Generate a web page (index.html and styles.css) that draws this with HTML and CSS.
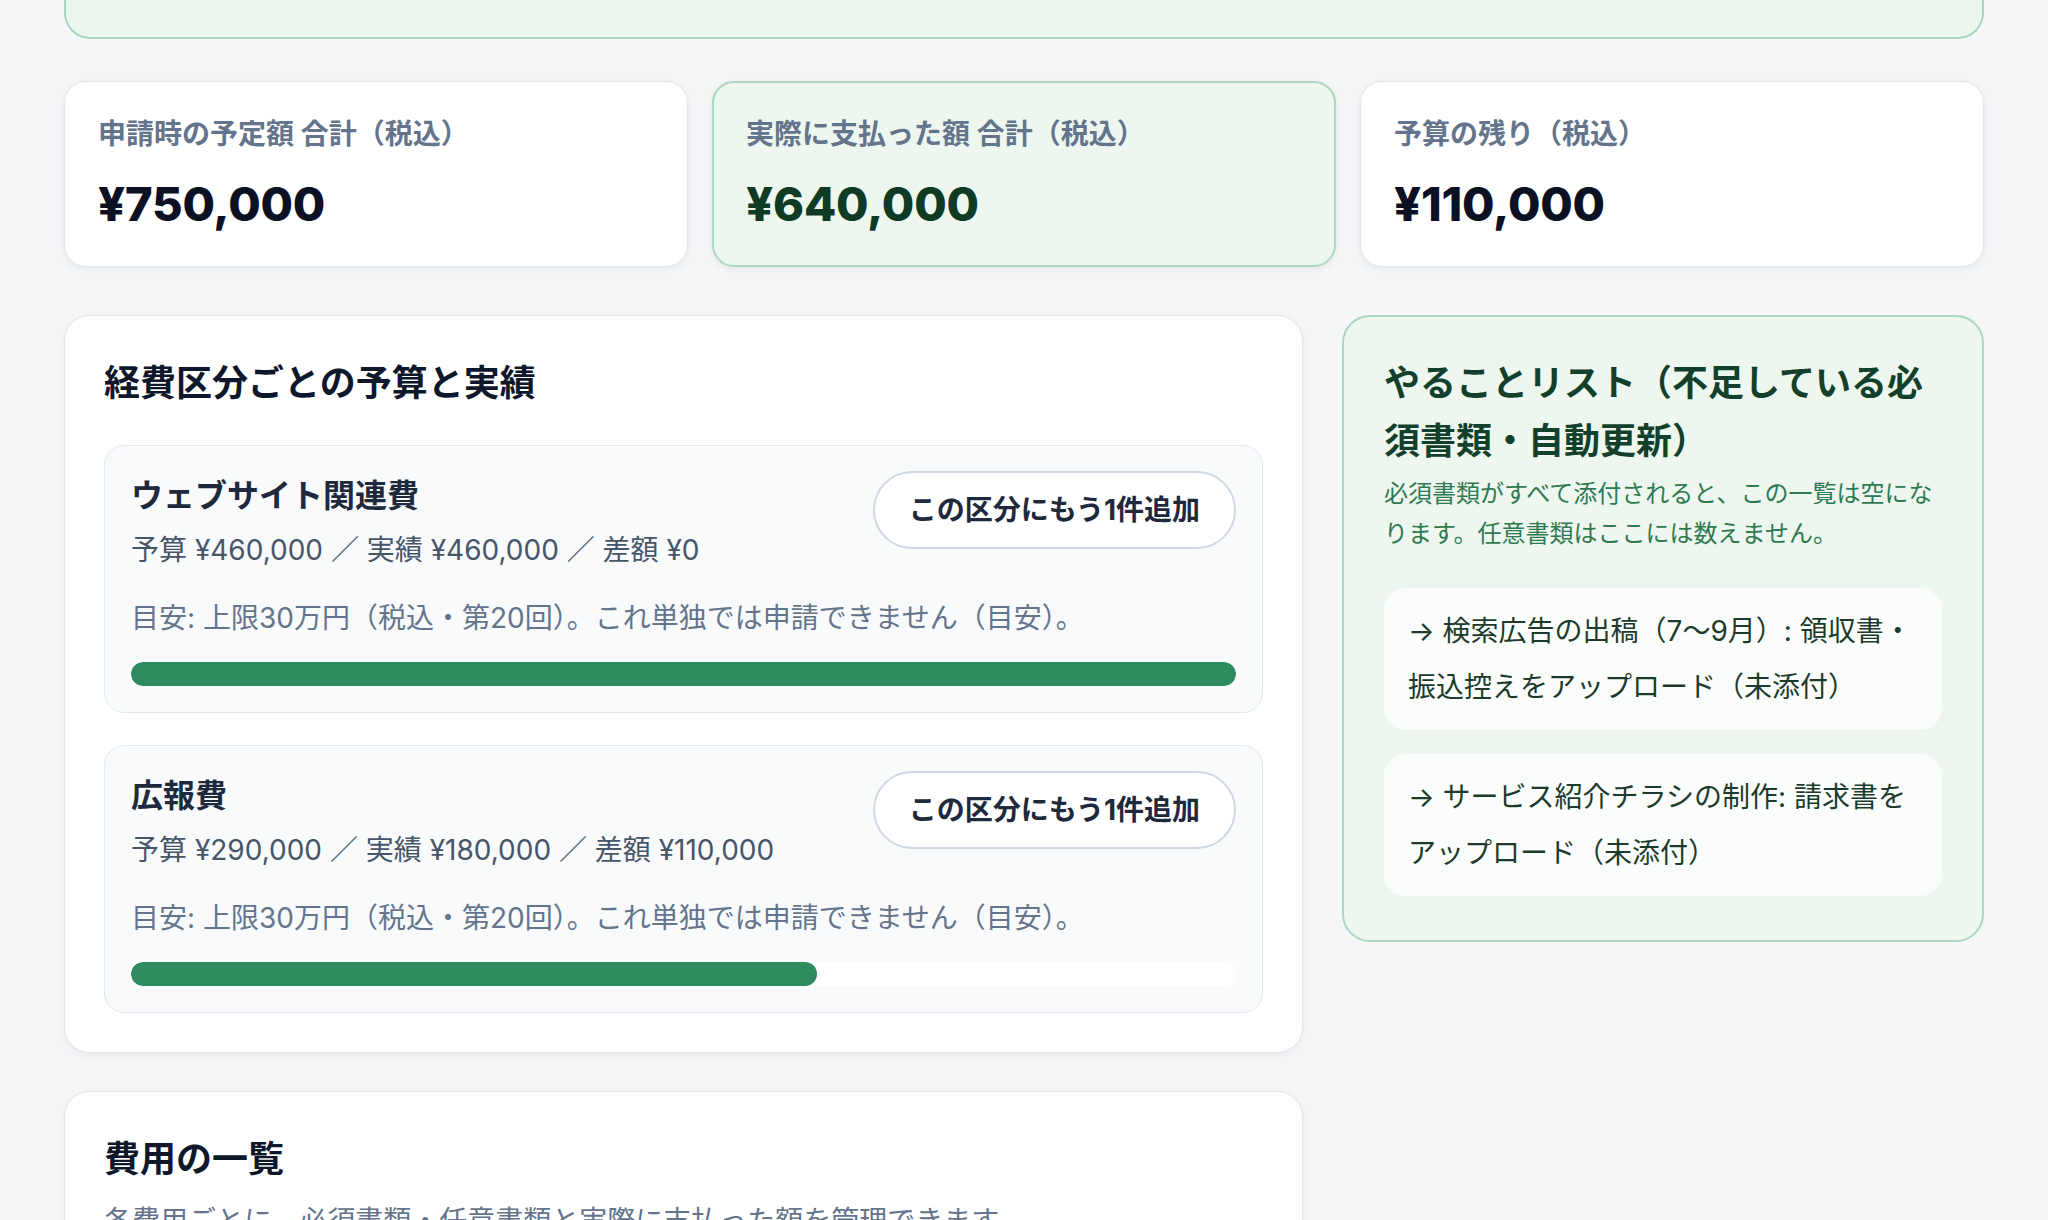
FILE: index.html
```html
<!DOCTYPE html>
<html lang="ja">
<head>
<meta charset="utf-8">
<title>経費管理</title>
<link rel="stylesheet" href="styles.css">
</head>
<body>
<div class="page">
  <div class="notice"></div>

  <section class="stats">
    <div class="stat">
      <div class="stat-label">申請時の予定額 合計（税込）</div>
      <div class="stat-value">¥750,000</div>
    </div>
    <div class="stat stat-green">
      <div class="stat-label">実際に支払った額 合計（税込）</div>
      <div class="stat-value">¥640,000</div>
    </div>
    <div class="stat">
      <div class="stat-label">予算の残り（税込）</div>
      <div class="stat-value">¥110,000</div>
    </div>
  </section>

  <div class="main-grid">
    <div class="main-col">
      <section class="card">
        <h2 class="card-title">経費区分ごとの予算と実績</h2>
        <div class="cat-list">
          <div class="cat">
            <div class="cat-head">
              <div class="cat-info">
                <div class="cat-name">ウェブサイト関連費</div>
                <div class="cat-nums">予算 ¥460,000 ／ 実績 ¥460,000 ／ 差額 ¥0</div>
              </div>
              <button class="btn">この区分にもう1件追加</button>
            </div>
            <div class="cat-hint">目安: 上限30万円（税込・第20回）。これ単独では申請できません（目安）。</div>
            <div class="bar"><div class="bar-fill" style="width:100%"></div></div>
          </div>
          <div class="cat">
            <div class="cat-head">
              <div class="cat-info">
                <div class="cat-name">広報費</div>
                <div class="cat-nums">予算 ¥290,000 ／ 実績 ¥180,000 ／ 差額 ¥110,000</div>
              </div>
              <button class="btn">この区分にもう1件追加</button>
            </div>
            <div class="cat-hint">目安: 上限30万円（税込・第20回）。これ単独では申請できません（目安）。</div>
            <div class="bar"><div class="bar-fill" style="width:62.07%"></div></div>
          </div>
        </div>
      </section>

      <section class="card">
        <h2 class="card-title">費用の一覧</h2>
        <p class="card-sub">各費用ごとに、必須書類・任意書類と実際に支払った額を管理できます。</p>
      </section>
    </div>

    <aside class="todo">
      <h2 class="todo-title">やることリスト（不足している必須書類・自動更新）</h2>
      <p class="todo-desc">必須書類がすべて添付されると、この一覧は空になります。任意書類はここには数えません。</p>
      <ul class="todo-list">
        <li class="todo-item">→ 検索広告の出稿（7〜9月）: 領収書・振込控えをアップロード（未添付）</li>
        <li class="todo-item">→ サービス紹介チラシの制作: 請求書をアップロード（未添付）</li>
      </ul>
    </aside>
  </div>
</div>
</body>
</html>
```

FILE: styles.css
```css
* { box-sizing: border-box; }

html, body {
  margin: 0;
  padding: 0;
}

body {
  background: #f5f6f8;
  font-family: "Inter", "Noto Sans CJK JP", sans-serif;
  color: #0f172a;
  overflow: hidden;
}

.page {
  width: 1920px;
  margin: 0 auto;
}

.notice {
  height: 39px;
  background: #ebf6ef;
  border: 2px solid #a9d6bd;
  border-top: none;
  border-radius: 0 0 26px 26px;
}

.stats {
  display: grid;
  grid-template-columns: repeat(3, 1fr);
  gap: 24px;
  margin-top: 42px;
}

.stat {
  background: #fff;
  border: 1px solid #e2e8f0;
  border-radius: 22px;
  padding: 32px 33px 34px;
  box-shadow: 0 2px 6px rgba(15, 23, 42, 0.07);
}

.stat-green {
  background: #edf7f0;
  border: 2px solid #acd8bf;
  padding: 31px 32px 33px;
}

.stat-label {
  font-size: 28px;
  line-height: 40px;
  font-weight: 700;
  color: #64748b;
}

.stat-value {
  margin-top: 22px;
  font-size: 47px;
  line-height: 56px;
  font-weight: 800;
  color: #0b1122;
  letter-spacing: -0.2px;
}

.stat-green .stat-value { color: #0f3a24; }

.main-grid {
  display: grid;
  grid-template-columns: minmax(0, 1fr) 642px;
  gap: 39px;
  margin-top: 48px;
  align-items: start;
}

.main-col {
  display: flex;
  flex-direction: column;
  gap: 38px;
}

.card {
  background: #fff;
  border: 1px solid #e5e7eb;
  border-radius: 26px;
  padding: 39px;
  box-shadow: 0 2px 6px rgba(15, 23, 42, 0.06);
}

.card-title {
  margin: 0;
  font-size: 36px;
  line-height: 57.6px;
  font-weight: 700;
  color: #0f172a;
}

.card-sub {
  margin: 12px 0 0;
  font-size: 28px;
  line-height: 42px;
  color: #64748b;
}

.cat-list {
  margin-top: 32px;
  display: flex;
  flex-direction: column;
  gap: 32px;
}

.cat {
  background: #f8fafc;
  border: 1px solid #e2e8f0;
  border-radius: 20px;
  padding: 26px;
}

.cat-head {
  display: flex;
  justify-content: space-between;
  align-items: flex-start;
  gap: 24px;
}

.cat-name {
  font-size: 32px;
  line-height: 48px;
  font-weight: 700;
  color: #1e293b;
}

.cat-nums {
  margin-top: 10px;
  font-size: 28px;
  line-height: 40px;
  color: #475569;
}

.btn {
  flex: none;
  margin-top: -1px;
  font-family: inherit;
  font-size: 28px;
  line-height: 40px;
  font-weight: 700;
  color: #1e293b;
  background: #fff;
  border: 2px solid #cfd8e3;
  border-radius: 999px;
  padding: 17px 34px;
}

.cat-hint {
  margin-top: 28px;
  font-size: 28px;
  line-height: 40px;
  color: #64748b;
}

.bar {
  margin-top: 24px;
  height: 24px;
  background: #ffffff;
  border-radius: 999px;
  overflow: hidden;
}

.bar-fill {
  height: 100%;
  background: #2e8a5f;
  border-radius: 999px;
}

.todo {
  background: #edf7f0;
  border: 2px solid #acd8bf;
  border-radius: 28px;
  padding: 38px 40px 44px;
}

.todo-title {
  margin: 0;
  font-size: 36px;
  line-height: 57.6px;
  font-weight: 700;
  color: #12402a;
}

.todo-desc {
  margin: 4px 0 0;
  font-size: 24px;
  line-height: 40px;
  color: #2f7a50;
}

.todo-list {
  list-style: none;
  margin: 34px 0 0;
  padding: 0;
  display: flex;
  flex-direction: column;
  gap: 24px;
}

.todo-item {
  background: #fbfdfc;
  border-radius: 22px;
  padding: 15px 24px;
  font-size: 28px;
  line-height: 56px;
  color: #1c3b2b;
}
```
